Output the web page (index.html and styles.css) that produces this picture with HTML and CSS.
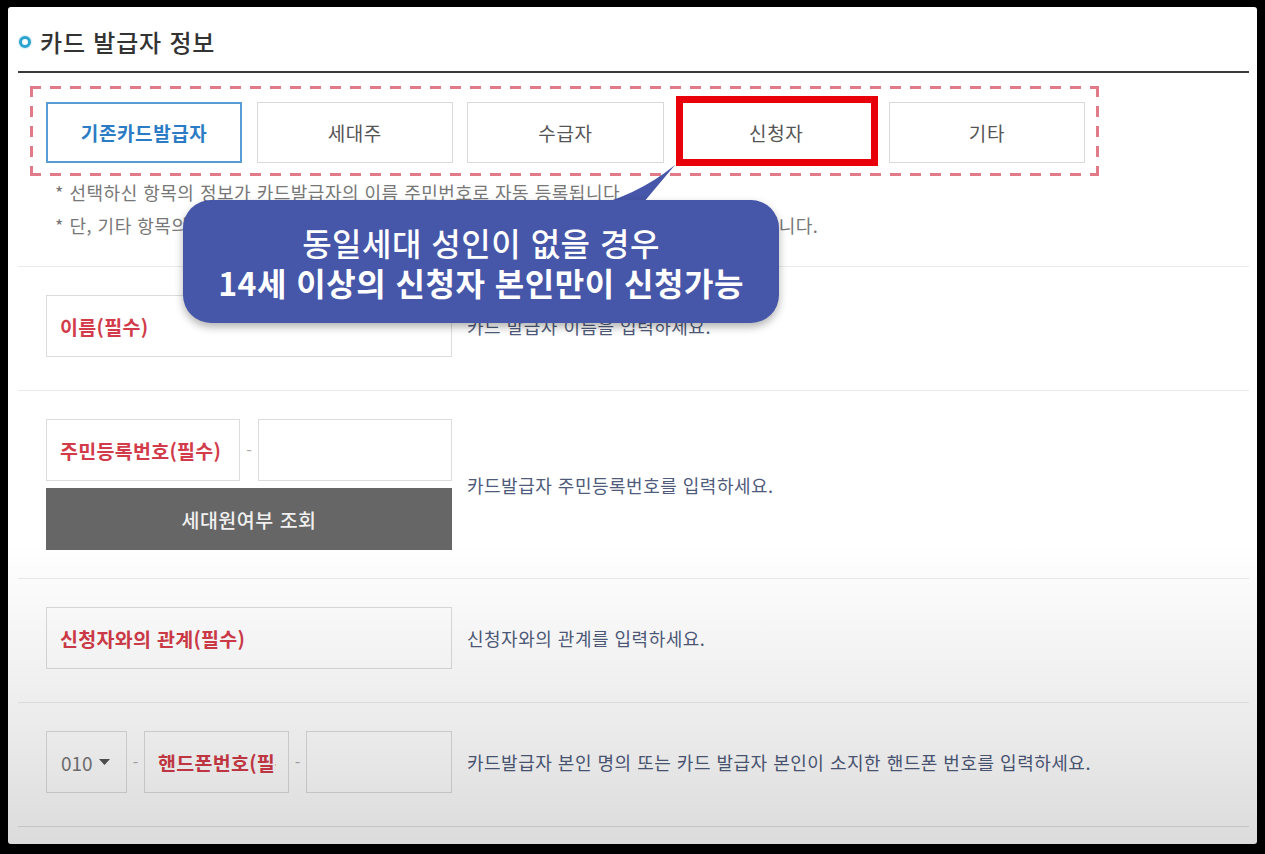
FILE: index.html
```html
<!DOCTYPE html>
<html lang="ko">
<head>
<meta charset="utf-8">
<title>카드 발급자 정보</title>
<link rel="stylesheet" href="styles.css">
</head>
<body>
<div class="screen">
  <section class="issuer">
    <header class="sec-head">
      <span class="dot"></span>
      <h2>카드 발급자 정보</h2>
    </header>

    <div class="choice-box">
      <button type="button" class="choice active">기존카드발급자</button>
      <button type="button" class="choice">세대주</button>
      <button type="button" class="choice">수급자</button>
      <button type="button" class="choice highlighted">신청자</button>
      <button type="button" class="choice">기타</button>
    </div>

    <ul class="notes">
      <li>* 선택하신 항목의 정보가 카드발급자의 이름 주민번호로 자동 등록됩니다.</li>
      <li>* 단, 기타 항목의 경우 카드발급자의 이름과 주민등록번호를 직접 입력하셔야만 신청이 가능합니다.</li>
    </ul>

    <div class="row">
      <div class="field">
        <input class="box" type="text" placeholder="이름(필수)">
      </div>
      <p class="help">카드 발급자 이름을 입력하세요.</p>
    </div>

    <div class="row tall">
      <div class="field">
        <div class="inline">
          <input class="box half" type="text" placeholder="주민등록번호(필수)">
          <span class="dash">-</span>
          <input class="box half" type="password">
        </div>
        <button type="button" class="lookup">세대원여부 조회</button>
      </div>
      <p class="help">카드발급자 주민등록번호를 입력하세요.</p>
    </div>

    <div class="row">
      <div class="field">
        <input class="box" type="text" placeholder="신청자와의 관계(필수)">
      </div>
      <p class="help">신청자와의 관계를 입력하세요.</p>
    </div>

    <div class="row">
      <div class="field">
        <div class="inline">
          <div class="select">010
            <svg class="caret" width="11" height="6" viewBox="0 0 11 6"><path d="M0 0H11L5.5 6Z" fill="#555"/></svg>
          </div>
          <span class="dash">-</span>
          <input class="box phone" type="text" placeholder="핸드폰번호(필수)">
          <span class="dash">-</span>
          <input class="box phone-last" type="text">
        </div>
      </div>
      <p class="help">카드발급자 본인 명의 또는 카드 발급자 본인이 소지한 핸드폰 번호를 입력하세요.</p>
    </div>
  </section>

  <svg class="tail" width="110" height="52" viewBox="0 0 110 52">
    <path d="M4 52 Q58 40 97 8 L60 52 Z" fill="#4656a8"/>
  </svg>
  <div class="callout">
    <p class="callout-l1">동일세대 성인이 없을 경우</p>
    <p class="callout-l2">14세 이상의 신청자 본인만이 신청가능</p>
  </div>
</div>
</body>
</html>
```

FILE: styles.css
```css
html, body {
  margin: 0;
  padding: 0;
  background: #000;
}

body {
  font-family: "Noto Sans CJK KR", "Noto Sans", "DejaVu Sans", sans-serif;
  padding: 7px 0 0 8px;
  height: 854px;
  box-sizing: border-box;
  overflow: hidden;
}

.screen {
  position: relative;
  width: 1249px;
  height: 837px;
  background: #fff;
  border-radius: 3px;
  overflow: hidden;
  padding: 0 8px 0 10px;
  box-sizing: border-box;
}

/* soft vignette of the captured video frame */
.screen::after {
  content: "";
  position: absolute;
  inset: 0;
  pointer-events: none;
  background: linear-gradient(to bottom,
    rgba(0,0,0,0) 0%,
    rgba(0,0,0,0) 64%,
    rgba(0,0,0,0.04) 75%,
    rgba(0,0,0,0.085) 88%,
    rgba(0,0,0,0.14) 100%);
  z-index: 5;
}

.sec-head {
  display: flex;
  align-items: center;
  gap: 9px;
  padding: 20px 0 14px 1px;
  border-bottom: 2px solid #3a3a3a;
}

.dot {
  width: 6px;
  height: 6px;
  border: 3px solid #2aa3cf;
  border-radius: 50%;
  box-shadow: 0 0 2px rgba(42, 163, 207, 0.7);
  flex: none;
}

.sec-head h2 {
  margin: 0;
  font-size: 24px;
  letter-spacing: 0.8px;
  line-height: 30px;
  font-weight: 500;
  color: #333;
}

.choice-box {
  margin: 13px 0 0 12px;
  width: 1069px;
  box-sizing: border-box;
  padding: 16px 14px 13px 16px;
  display: grid;
  grid-template-columns: repeat(5, 1fr);
  column-gap: 14.5px;
  background:
    repeating-linear-gradient(90deg, #e27b89 0 11px, transparent 11px 20px) left top / 100% 3px no-repeat,
    repeating-linear-gradient(90deg, #e27b89 0 11px, transparent 11px 20px) left bottom / 100% 3px no-repeat,
    repeating-linear-gradient(180deg, #e27b89 0 11px, transparent 11px 20px) left top / 3px 100% no-repeat,
    repeating-linear-gradient(180deg, #e27b89 0 11px, transparent 11px 20px) right top / 3px 100% no-repeat;
}

.choice {
  position: relative;
  height: 61px;
  border: 1px solid #d9d9d9;
  background: #fff;
  font-family: inherit;
  font-size: 19px;
  letter-spacing: 0.6px;
  font-weight: 400;
  color: #555;
  padding: 0;
  margin: 0;
}

.choice.active {
  border: 2px solid #5b9bd4;
  color: #2b7cc4;
  font-weight: 700;
}

.choice.highlighted::after {
  content: "";
  position: absolute;
  left: -3px;
  right: -5px;
  top: -7px;
  bottom: -4px;
  border: 7px solid #e8000b;
}

.notes {
  list-style: none;
  margin: 0 0 24px;
  padding: 0 0 0 37px;
  font-size: 18px;
  letter-spacing: 0.5px;
  line-height: 33px;
  color: #777;
}

.row {
  display: flex;
  align-items: center;
  gap: 15px;
  padding: 28px 0 33px 28px;
  border-top: 1px solid #ebebeb;
}

.row:last-child {
  border-bottom: 1px solid #e2e2e2;
}

.row.tall {
  padding-bottom: 28px;
}

.field {
  width: 406px;
  flex: none;
  display: flex;
  flex-direction: column;
  gap: 7px;
}

.inline {
  display: flex;
  align-items: center;
  justify-content: space-between;
}

.box {
  height: 62px;
  box-sizing: border-box;
  border: 1px solid #dcdcdc;
  background: transparent;
  padding: 0 12px 0 13px;
  margin: 0;
  font-family: inherit;
  font-size: 19.5px;
  letter-spacing: 0.3px;
  font-weight: 700;
  color: #333;
  outline: none;
  width: 100%;
}

.box::placeholder {
  color: #d23b49;
  opacity: 1;
}

.box.half {
  width: 194px;
}

.box.phone {
  width: 145px;
  padding-left: 13px;
}

.box.phone-last {
  width: 146px;
}

.dash {
  color: #aaa;
  font-size: 16px;
}

.select {
  width: 81px;
  height: 62px;
  box-sizing: border-box;
  border: 1px solid #dcdcdc;
  display: flex;
  align-items: center;
  gap: 6px;
  padding-left: 14px;
  font-size: 19px;
  color: #777;
}

.caret {
  display: block;
}

.lookup {
  height: 62px;
  border: 0;
  margin: 0;
  background: #666;
  color: #f0f0f0;
  font-family: inherit;
  font-size: 19.5px;
  letter-spacing: 0.5px;
  font-weight: 500;
}

.help {
  margin: 0;
  font-size: 18px;
  letter-spacing: 0.5px;
  color: #4f5b7b;
  white-space: nowrap;
}

/* speech-bubble annotation laid over the form */
.tail {
  position: absolute;
  left: 570px;
  top: 150px;
  z-index: 6;
  display: block;
}

.callout {
  position: absolute;
  left: 175px;
  top: 193px;
  width: 596px;
  height: 123px;
  border-radius: 28px;
  background: #4656a8;
  box-shadow: 0 4px 9px rgba(0, 0, 0, 0.3);
  z-index: 6;
  display: flex;
  flex-direction: column;
  justify-content: center;
  align-items: center;
  color: #fff;
  font-size: 32px;
  letter-spacing: 0.5px;
  line-height: 40px;
}

.callout p {
  margin: 0;
  white-space: nowrap;
}

.callout-l1 {
  font-weight: 500;
}

.callout-l2 {
  font-weight: 700;
}
```
